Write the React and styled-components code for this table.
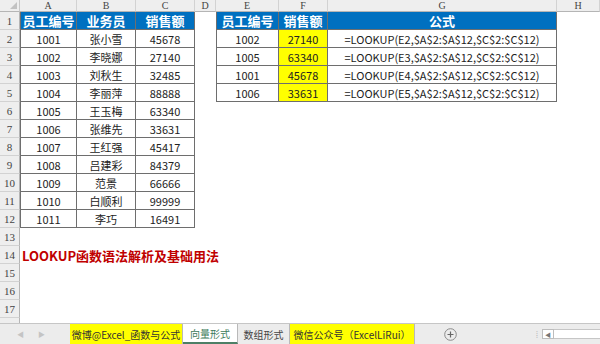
import React from 'react';
import styled, { createGlobalStyle, css } from 'styled-components';

const Global = createGlobalStyle`
  html, body { margin: 0; padding: 0; background: #fff; }
  body {
    width: 600px; height: 344px; overflow: hidden;
    font-family: "Noto Sans CJK SC", "Noto Sans", sans-serif;
  }
`;

const COLS = ['A', 'B', 'C', 'D', 'E', 'F', 'G', 'H'];
const LINE = '#6e6e6e';

const left = [
  ['1001', '张小雪', '45678'],
  ['1002', '李晓娜', '27140'],
  ['1003', '刘秋生', '32485'],
  ['1004', '李丽萍', '88888'],
  ['1005', '王玉梅', '63340'],
  ['1006', '张维先', '33631'],
  ['1007', '王红强', '45417'],
  ['1008', '吕建彩', '84379'],
  ['1009', '范景', '66666'],
  ['1010', '白顺利', '99999'],
  ['1011', '李巧', '16491'],
];

const right = [
  ['1002', '27140', 'E2'],
  ['1005', '63340', 'E3'],
  ['1001', '45678', 'E4'],
  ['1006', '33631', 'E5'],
];

const Frame = styled.div`
  width: 600px;
  height: 344px;
  display: flex;
  flex-direction: column;
  overflow: hidden;
`;

const Sheet = styled.div`
  flex: 1;
  min-height: 0;
  overflow: hidden;
  display: grid;
  grid-template-columns: 20px 57px 59px 59px 21px 63px 49px 229px 1fr;
  grid-template-rows: 12px repeat(17, 18px) 1fr;
`;

const Corner = styled.div`
  box-sizing: border-box;
  background: #eeeeee;
  border-right: 1px solid #c8c8c8;
  border-bottom: 1px solid #b5b5b5;
  display: flex;
  align-items: flex-end;
  justify-content: flex-end;
  padding: 0 2px 2px 0;
`;

const ColHead = styled.div`
  box-sizing: border-box;
  background: #eeeeee;
  border-right: 1px solid #d2d2d2;
  border-bottom: 1px solid #b5b5b5;
  display: flex;
  align-items: center;
  justify-content: center;
  font-family: "Liberation Serif", "DejaVu Serif", serif;
  font-size: 10px;
  color: #444;
  line-height: 1;
`;

const RowHead = styled.div`
  box-sizing: border-box;
  background: #eeeeee;
  border-right: 1px solid #b5b5b5;
  border-bottom: ${(p) => (p.$filler ? 'none' : '1px solid #d2d2d2')};
  display: flex;
  align-items: center;
  justify-content: center;
  font-family: "Liberation Serif", "DejaVu Serif", serif;
  font-size: 11px;
  color: #444;
`;

const Cell = styled.div`
  box-sizing: border-box;
  display: flex;
  align-items: center;
  justify-content: center;
  font-size: 11px;
  color: #222;
  white-space: nowrap;
  background: ${(p) => p.$bg || '#fff'};
  ${(p) =>
    p.$boxed &&
    css`
      border-right: 1px solid ${LINE};
      border-bottom: 1px solid ${LINE};
    `}
  ${(p) =>
    p.$first &&
    css`
      border-left: 1px solid ${LINE};
    `}
  ${(p) =>
    p.$head &&
    css`
      background: #0070c0;
      color: #fff;
      font-weight: 700;
      font-size: 13px;
    `}
`;

const Title = styled(Cell)`
  justify-content: flex-start;
  overflow: visible;
  position: relative;
  z-index: 1;
  padding-left: 2px;
  font-size: 13px;
  font-weight: 700;
  color: #c00000;
`;

const Filler = styled.div`
  grid-column: 2 / -1;
  background: #fff;
`;

const TabBar = styled.div`
  flex: none;
  height: 21px;
  box-sizing: border-box;
  display: flex;
  align-items: stretch;
  background: #ececec;
  border-top: 1px solid #c6c6c6;
`;

const Nav = styled.div`
  width: 70px;
  display: flex;
  align-items: center;
  gap: 14px;
  padding-left: 17px;
  box-sizing: border-box;
  color: #c4c4c4;
  font-size: 7px;
`;

const Tab = styled.div`
  display: flex;
  align-items: center;
  justify-content: center;
  box-sizing: border-box;
  width: ${(p) => p.$w}px;
  font-size: 10px;
  white-space: nowrap;
  border-right: 1px solid #b9b9b9;
  color: #333;
  ${(p) =>
    p.$kind === 'yellow' &&
    css`
      background: #ffff00;
    `}
  ${(p) =>
    p.$kind === 'active' &&
    css`
      background: #fff;
      color: #3d7a5a;
      border-bottom: 2px solid #4d7f66;
    `}
  ${(p) =>
    p.$kind === 'plain' &&
    css`
      color: #444;
    `}
`;

const AddWrap = styled.div`
  width: 56px;
  display: flex;
  align-items: center;
  justify-content: center;
  padding-left: 14px;
  box-sizing: border-box;
`;

const Spacer = styled.div`
  flex: 1;
`;

const ScrollArea = styled.div`
  display: flex;
  align-items: center;
`;

const Grip = styled.div`
  width: 10px;
  color: #bdbdbd;
  font-size: 9px;
  text-align: center;
`;

const ScrollBtn = styled.div`
  width: 12px;
  height: 10px;
  box-sizing: border-box;
  border: 1px solid #bdbdbd;
  background: #fff;
  display: flex;
  align-items: center;
  justify-content: center;
  color: #777;
  font-size: 6px;
`;

const Track = styled.div`
  width: 46px;
  height: 10px;
  box-sizing: border-box;
  border: 1px solid #c6c6c6;
  border-left: none;
  border-right: none;
  background: #fff;
`;

function Row({ n, children }) {
  return (
    <>
      <RowHead>{n}</RowHead>
      {children}
    </>
  );
}

export default function App() {
  const rows = [];

  rows.push(
    <Row key={1} n={1}>
      <Cell $boxed $first $head>员工编号</Cell>
      <Cell $boxed $head>业务员</Cell>
      <Cell $boxed $head>销售额</Cell>
      <Cell />
      <Cell $boxed $first $head>员工编号</Cell>
      <Cell $boxed $head>销售额</Cell>
      <Cell $boxed $head>公式</Cell>
      <Cell />
    </Row>
  );

  for (let i = 0; i < 16; i++) {
    const n = i + 2;
    const l = left[i];
    const r = right[i];
    rows.push(
      <Row key={n} n={n}>
        {n === 14 ? (
          <Title>LOOKUP函数语法解析及基础用法</Title>
        ) : (
          <Cell $boxed={!!l} $first={!!l}>{l ? l[0] : ''}</Cell>
        )}
        <Cell $boxed={!!l}>{l ? l[1] : ''}</Cell>
        <Cell $boxed={!!l}>{l ? l[2] : ''}</Cell>
        <Cell />
        <Cell $boxed={!!r} $first={!!r}>{r ? r[0] : ''}</Cell>
        <Cell $boxed={!!r} $bg={r ? '#ffff00' : undefined}>{r ? r[1] : ''}</Cell>
        <Cell $boxed={!!r}>
          {r ? `=LOOKUP(${r[2]},$A$2:$A$12,$C$2:$C$12)` : ''}
        </Cell>
        <Cell />
      </Row>
    );
  }

  return (
    <>
      <Global />
      <Frame>
        <Sheet>
          <Corner>
            <svg width="7" height="7" viewBox="0 0 7 7">
              <polygon points="7,0 7,7 0,7" fill="#c2c2c2" />
            </svg>
          </Corner>
          {COLS.map((c) => (
            <ColHead key={c}>{c}</ColHead>
          ))}
          {rows}
          <RowHead $filler />
          <Filler />
        </Sheet>
        <TabBar>
          <Nav>
            <span>◀</span>
            <span>▶</span>
          </Nav>
          <Tab $kind="yellow" $w={113}>微博@Excel_函数与公式</Tab>
          <Tab $kind="active" $w={55}>向量形式</Tab>
          <Tab $kind="plain" $w={52}>数组形式</Tab>
          <Tab $kind="yellow" $w={125}>微信公众号（ExcelLiRui）</Tab>
          <AddWrap>
            <svg width="13" height="13" viewBox="0 0 13 13">
              <circle cx="6.5" cy="6.5" r="5.8" fill="none" stroke="#8a8a8a" strokeWidth="1" />
              <path d="M6.5 3.5v6M3.5 6.5h6" stroke="#666" strokeWidth="1.2" />
            </svg>
          </AddWrap>
          <Spacer />
          <ScrollArea>
            <Grip>⁞</Grip>
            <ScrollBtn>◀</ScrollBtn>
            <Track />
          </ScrollArea>
        </TabBar>
      </Frame>
    </>
  );
}
